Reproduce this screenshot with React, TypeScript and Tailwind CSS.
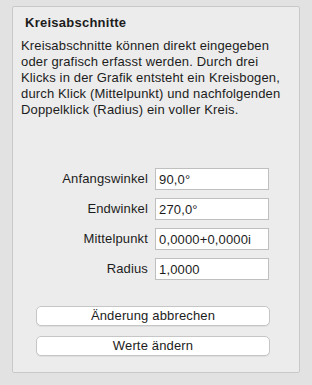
import React from 'react';

const lines = [
  'Kreisabschnitte können direkt eingegeben',
  'oder grafisch erfasst werden. Durch drei',
  'Klicks in der Grafik entsteht ein Kreisbogen,',
  'durch Klick (Mittelpunkt) und nachfolgenden',
  'Doppelklick (Radius) ein voller Kreis.',
];

const fields = [
  { label: 'Anfangswinkel', value: '90,0°' },
  { label: 'Endwinkel', value: '270,0°' },
  { label: 'Mittelpunkt', value: '0,0000+0,0000i' },
  { label: 'Radius', value: '1,0000' },
];

export default function App() {
  return (
    <div className="w-[312px] h-[385px] bg-[#e2e2e2] pt-[6px] px-3 font-['Liberation_Sans',Arial,sans-serif] text-[#1c1c1c] text-[13px] leading-[16px] tracking-[0.15px]">
      <div className="h-[367px] bg-[#ececec] border border-[#c9c9c9] rounded-[2px] flex flex-col">
        {/* Titel */}
        <div className="pl-3 pt-[8px] font-bold tracking-[0.25px]">Kreisabschnitte</div>
        {/* Beschreibung */}
        <div className="pl-2 mt-[7px]">
          {lines.map((l) => (
            <div key={l} className="whitespace-nowrap">{l}</div>
          ))}
        </div>

        {/* Eingabefelder */}
        <div className="mt-[50px] ml-[15px] flex flex-col gap-2">
          {fields.map((f) => (
            <div key={f.label} className="flex items-center gap-[7px]">
              <div className="w-[120px] text-right">{f.label}</div>
              <input
                readOnly
                value={f.value}
                className="w-[114px] h-[22px] bg-white border border-[#bfbfbf] px-[3px] text-[13px] tracking-[0.15px] text-[#1c1c1c] outline-none"
              />
            </div>
          ))}
        </div>

        {/* Buttons */}
        <div className="mt-[26px] ml-[23px] flex flex-col gap-[10px]">
          <button className="w-[234px] h-[20px] bg-white border border-[#c6c6c6] rounded-[5px] shadow-[0_1px_0_rgba(0,0,0,0.06)] leading-[18px]">
            Änderung abbrechen
          </button>
          <button className="w-[234px] h-[20px] bg-white border border-[#c6c6c6] rounded-[5px] shadow-[0_1px_0_rgba(0,0,0,0.06)] leading-[18px]">
            Werte ändern
          </button>
        </div>
      </div>
    </div>
  );
}
